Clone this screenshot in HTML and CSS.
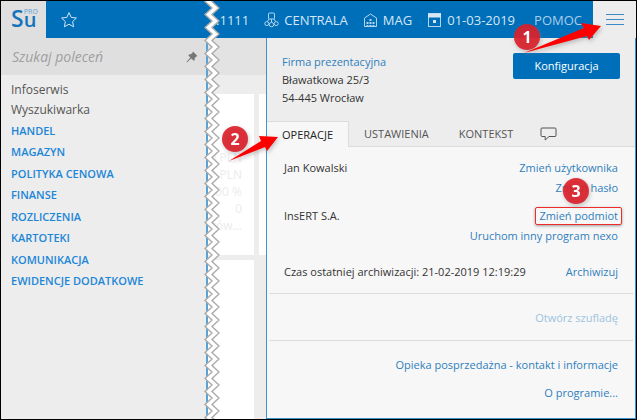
FILE: index.html
```html
<!DOCTYPE html>
<html lang="pl">
<head>
<meta charset="utf-8">
<title>Su PRO</title>
<link rel="stylesheet" href="styles.css">
</head>
<body>
<div class="app">
  <header class="topbar">
    <div class="logo"><span>S</span><span class="logo-side"><span class="logo-pro">PRO</span><span class="logo-u">u</span></span></div>
    <button class="star" aria-label="Ulubione">
      <svg width="18" height="18" viewBox="0 0 18 18"><path d="M9 1.6 L11.2 6.4 L16.4 7 L12.6 10.6 L13.6 15.8 L9 13.2 L4.4 15.8 L5.4 10.6 L1.6 7 L6.8 6.4 Z"/></svg>
    </button>
    <nav class="status">
      <span class="item">.1111</span>
      <span class="item">
        <svg class="icon" width="15" height="16" viewBox="0 0 15 16"><rect x="4.5" y="1" width="6" height="6" rx="1"/><path d="M5 7 L3.5 9.5 M10 7 L11.5 9.5 M7.5 7 V10"/><circle cx="2.8" cy="11.6" r="2"/><circle cx="12.2" cy="11.6" r="2"/><circle cx="7.5" cy="12.6" r="2.2"/></svg>
        CENTRALA
      </span>
      <span class="item">
        <svg class="icon" width="15" height="16" viewBox="0 0 15 16"><path d="M1.5 14.5 V6 L7.5 2 L13.5 6 V14.5 Z"/><path class="dots" d="M7.5 7 V14 M4.5 10 V14 M10.5 10 V14"/></svg>
        MAG
      </span>
      <span class="item">
        <svg class="icon" width="15" height="14" viewBox="0 0 15 14"><rect x="1.5" y="0.5" width="12" height="13"/><path class="solid" d="M1 0.5 H14 V4.5 H1 Z M6 7 H9 V10 H6 Z"/></svg>
        01-03-2019
      </span>
      <a class="item help" href="#">POMOC</a>
    </nav>
    <button class="menu" aria-label="Menu"><span></span><span></span><span></span></button>
  </header>

  <div class="body">
    <aside class="sidebar">
      <div class="search">
        <input type="text" placeholder="Szukaj poleceń" aria-label="Szukaj poleceń">
        <svg width="12" height="12" viewBox="0 0 12 12"><path d="M7 0.5 L11.5 5 L10.4 5.4 L8.8 7 L8.6 9.4 L7.6 9.6 L5.2 7.4 L0.8 11.4 L0.4 11 L4.4 6.6 L2.4 4.4 L2.8 3.4 L5 3.2 L6.6 1.6 Z"/></svg>
      </div>
      <ul class="nav plain">
        <li><a href="#">Infoserwis</a></li>
        <li><a href="#">Wyszukiwarka</a></li>
      </ul>
      <ul class="nav modules">
        <li><a href="#">HANDEL</a></li>
        <li><a href="#">MAGAZYN</a></li>
        <li><a href="#">POLITYKA CENOWA</a></li>
        <li><a href="#">FINANSE</a></li>
        <li><a href="#">ROZLICZENIA</a></li>
        <li><a href="#">KARTOTEKI</a></li>
        <li><a href="#">KOMUNIKACJA</a></li>
        <li><a href="#">EWIDENCJE DODATKOWE</a></li>
      </ul>
    </aside>

    <main class="workspace">
      <div class="strip"></div>
      <div class="cards">
        <div class="card figures"><span>0 PLN</span><span>0 PLN</span><span>00 %</span><span>0</span><span>tów...</span></div>
        <div class="card"></div>
        <div class="card"></div>
      </div>
    </main>

    <section class="drawer">
      <div class="company">
        <address>
          <a href="#">Firma prezentacyjna</a>
          <span>Bławatkowa 25/3</span>
          <span>54-445 Wrocław</span>
        </address>
        <button class="primary">Konfiguracja</button>
      </div>
      <div class="tabs">
        <button class="tab active">OPERACJE</button>
        <button class="tab">USTAWIENIA</button>
        <button class="tab">KONTEKST</button>
        <button class="tab message" aria-label="Wiadomości">
          <svg width="17" height="14" viewBox="0 0 17 14"><path d="M2 1 H15 Q16 1 16 2 V8.5 Q16 9.5 15 9.5 H9 L5.2 13 V9.5 H2 Q1 9.5 1 8.5 V2 Q1 1 2 1 Z"/></svg>
        </button>
      </div>
      <div class="panel">
        <div class="row"><span>Jan Kowalski</span><span class="links"><a href="#">Zmień użytkownika</a><a href="#">Zmień hasło</a></span></div>
        <div class="row"><span>InsERT S.A.</span><span class="links"><a class="marked" href="#">Zmień podmiot</a><a href="#">Uruchom inny program nexo</a></span></div>
        <div class="row archive"><span>Czas ostatniej archiwizacji: 21-02-2019 12:19:29</span><a href="#">Archiwizuj</a></div>
        <div class="group"><a class="disabled" href="#">Otwórz szufladę</a></div>
        <div class="group about"><a href="#">Opieka posprzedażna - kontakt i informacje</a><a href="#">O programie...</a></div>
      </div>
    </section>
  </div>

  <svg class="tear" width="16" height="100%" aria-hidden="true">
    <defs>
      <pattern id="zig" width="16" height="13" patternUnits="userSpaceOnUse">
        <path class="band" d="M8 -6 L1 0.5 L8 7 L1 13.5 L8 20 L15 20 L8 13.5 L15 7 L8 0.5 L15 -6 Z"/>
        <path class="edge" d="M8 -6 L1 0.5 L8 7 L1 13.5 L8 20 M15 -6 L8 0.5 L15 7 L8 13.5 L15 20"/>
      </pattern>
    </defs>
    <rect width="16" height="100%" fill="url(#zig)"/>
  </svg>

  <div class="callout one"><b>1</b><svg width="80" height="32" viewBox="0 0 80 32"><path d="M1 30 L61 5 L58 0 L78 3 L66 17 L64 13 Z"/></svg></div>
  <div class="callout two"><b>2</b><svg width="54" height="30" viewBox="0 0 54 30"><path d="M3 26 L35 6 L33 1 L52 2 L41 16 L39 12 Z"/></svg></div>
  <div class="callout three"><b>3</b></div>
</div>
</body>
</html>
```
FILE: styles.css
```css
* { box-sizing: border-box; }
body { margin: 0; font-family: "Open Sans", "Noto Sans", sans-serif; font-size: 12px; line-height: 20px; color: #333; }
button { font: inherit; border: 0; padding: 0; background: none; }
a { color: #2f80bd; text-decoration: none; }
svg { display: block; fill: none; }
.app { position: relative; display: flex; flex-direction: column; min-height: 100vh; border: 1px solid #000; background: #ededed; overflow: hidden; }

.topbar { display: flex; height: 37px; background: #006fba; color: #d5e6f4; }
.logo { display: flex; width: 45px; padding-left: 10px; background: #dfdfdf; color: #1474bb; font-size: 23px; font-weight: 600; line-height: 34px; }
.logo-side { display: flex; flex-direction: column; padding-top: 8px; }
.logo-pro { font-size: 7px; line-height: 5px; color: #7db1d8; }
.logo-u { font-size: 20px; line-height: 11px; }
.star { padding-left: 14px; }
.star path { stroke: #d5e6f4; stroke-width: 1; }
.status { display: flex; flex: 1; align-items: center; justify-content: flex-end; gap: 15px; padding-right: 11px; font-size: 13px; }
.item { display: flex; align-items: center; gap: 5px; color: #d5e6f4; }
.help { color: #a9cde9; margin-left: 4px; }
.icon { stroke: #b5d5ed; }
.icon .dots { stroke-dasharray: 2 1; stroke-width: 2; }
.icon .solid { fill: #d5e6f4; stroke: none; }
.menu { display: flex; flex-direction: column; align-items: center; justify-content: center; gap: 4px; width: 43px; background: #ededed; }
.menu span { width: 18px; height: 1px; background: #3c8ac6; }

.body { display: flex; flex: 1; }
.sidebar { width: 207px; border-right: 2px solid #5ba3d4; }
.search { display: flex; align-items: center; height: 37px; padding: 0 8px 0 11px; background: #dfdfdf; }
.search input { flex: 1; min-width: 0; padding: 0; border: 0; background: none; font: italic 14px "Open Sans", sans-serif; }
.search input::placeholder { color: #a0a0a0; opacity: 1; }
.search svg { fill: #777; }
.nav { display: grid; list-style: none; margin: 0; padding: 0 10px; white-space: nowrap; }
.plain { padding-top: 5px; line-height: 20px; }
.plain a { color: #555; }
.modules { grid-auto-rows: 1fr; align-items: center; height: 172px; font-size: 11px; }
.modules a { color: #1c86d8; font-weight: 600; }

.workspace { display: flex; flex-direction: column; width: 58px; overflow: hidden; }
.strip { height: 37px; background: #e3e3e3; }
.cards { display: grid; flex: 1; grid-template-columns: 46px 8px; grid-template-rows: 161px 1fr; gap: 5px; padding-top: 19px; }
.card { background: #fff; }
.figures { display: flex; flex-direction: column; align-items: flex-end; gap: 1px; padding: 56px 12px 0 0; color: #ececec; line-height: 16px; white-space: nowrap; }

.drawer { display: flex; flex: 1; flex-direction: column; border: solid #3c93cf; border-width: 0 1px 1px; font-size: 11px; }
.company { display: flex; justify-content: space-between; padding: 15px 15px 0; height: 83px; }
.company address { display: flex; flex-direction: column; font-style: normal; line-height: 18px; }
.primary { width: 107px; height: 26px; border-radius: 2px; background: #006fba; color: #fff; }
.tabs { display: flex; border-bottom: 1px solid #dcdcdc; }
.tab { height: 26px; margin-bottom: -1px; padding: 0 15px; color: #555; border-bottom: 1px solid #dcdcdc; }
.tab path { stroke: #555; }
.message { padding: 0 12px; }
.active { border: solid #dcdcdc; border-width: 1px 1px 0 0; background: #f7f7f7; color: #222; }
.panel { flex: 1; padding: 11px 2px 0; background: #f7f7f7; }
.row { display: flex; justify-content: space-between; padding: 0 15px; height: 48px; }
.links { display: flex; flex-direction: column; align-items: flex-end; }
.archive { height: 31px; margin-top: 8px; }
.marked { position: relative; }
.marked::after { content: ""; position: absolute; inset: 1px -4px; border: 1px solid #f02b2b; border-radius: 2px; box-shadow: 0 1px 3px #999; }
.group { display: flex; flex-direction: column; align-items: flex-end; gap: 8px; height: 47px; padding: 14px 15px 0; border-top: 1px solid #dcdcdc; }
.about { height: 77px; }
.disabled { color: #9cc3e0; }

.tear { position: absolute; left: 203px; top: 0; height: 100%; }
.band { fill: #fff; }
.edge { stroke: #aaa; stroke-width: 1.4; }
.callout { position: absolute; filter: drop-shadow(1px 2px 2px #8888); }
.callout b { display: block; width: 26px; height: 26px; border-radius: 50%; background: #dc1e28e6; color: #fff; font: 700 16px/26px "Open Sans", sans-serif; text-align: center; }
.callout svg { position: absolute; fill: #f00; }
.one { left: 513px; top: 23px; }
.one svg { left: 9px; top: -1px; }
.two { left: 221px; top: 125px; }
.two svg { left: 4px; top: 9px; }
.three { left: 562px; top: 177px; }
```
